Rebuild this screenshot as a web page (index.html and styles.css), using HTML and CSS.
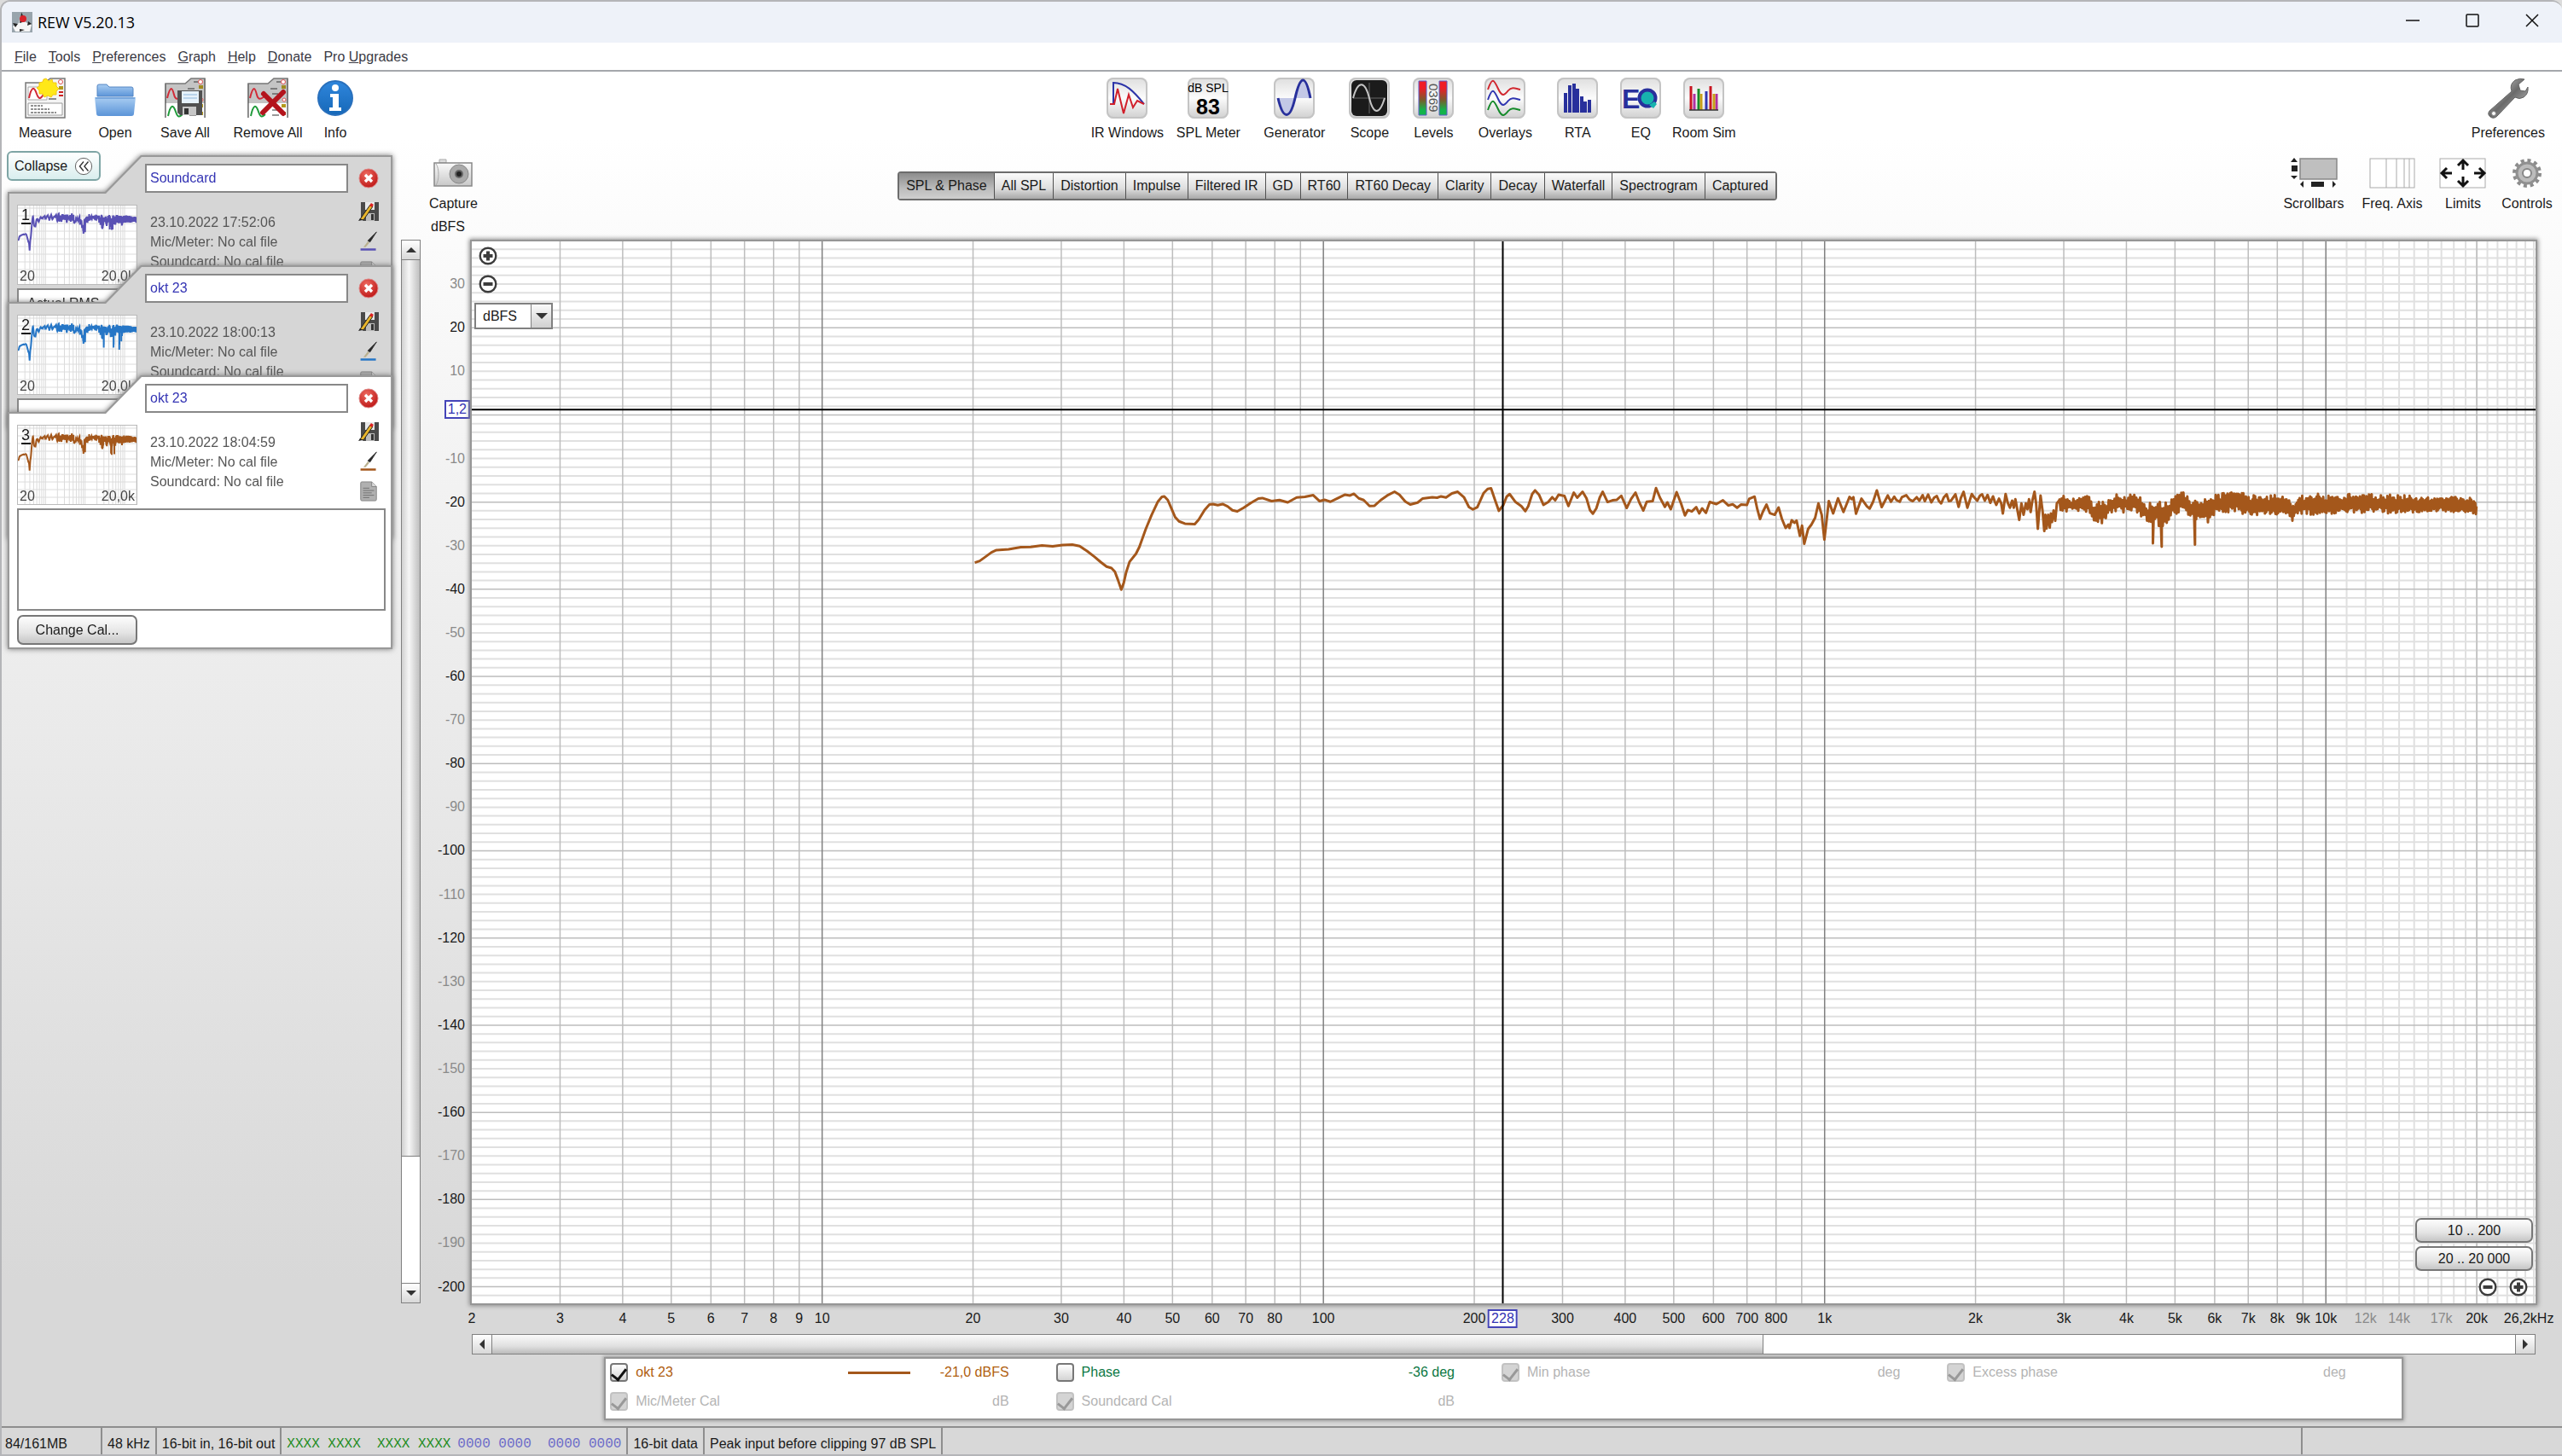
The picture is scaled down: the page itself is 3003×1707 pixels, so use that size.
FILE: index.html
```html
<!DOCTYPE html>
<html lang="en">
<head>
  <meta charset="UTF-8">
  <meta name="viewport" content="width=device-width, initial-scale=1.0">
  <title>REW V5.20.13</title>
  <link rel="stylesheet" href="styles.css">
</head>
<body>
  <!-- Shared gradients and symbols -->
  <svg class="defs" width="0" height="0" aria-hidden="true">
    <defs>
      <linearGradient id="grey-v" x1="0" y1="0" x2="0" y2="1"><stop offset="0" stop-color="#fafafa"/><stop offset="1" stop-color="#c8c8c8"/></linearGradient>
      <linearGradient id="blue-v" x1="0" y1="0" x2="0" y2="1"><stop offset="0" stop-color="#a9cdf2"/><stop offset="1" stop-color="#5b94d8"/></linearGradient>
      <linearGradient id="info-v" x1="0" y1="0" x2="0" y2="1"><stop offset="0" stop-color="#2f86dc"/><stop offset="1" stop-color="#1668b8"/></linearGradient>
      <linearGradient id="level-v" x1="0" y1="0" x2="0" y2="1"><stop offset="0.2" stop-color="#f01c26"/><stop offset="0.55" stop-color="#7c5a2a"/><stop offset="0.85" stop-color="#12b44a"/></linearGradient>
      <radialGradient id="red-r" cx="0.4" cy="0.3" r="0.8"><stop offset="0" stop-color="#ee6a60"/><stop offset="1" stop-color="#b80f0f"/></radialGradient>
      <linearGradient id="metal" x1="0" y1="0" x2="1" y2="1"><stop offset="0" stop-color="#e8e8e8"/><stop offset="0.5" stop-color="#6a6a6a"/><stop offset="1" stop-color="#d0d0d0"/></linearGradient>
      <symbol id="i-close" viewBox="0 0 24 24">
        <circle cx="12" cy="12" r="11" fill="url(#red-r)" stroke="#d88"/>
        <path d="M8 8l8 8M16 8l-8 8" stroke="#fff" stroke-width="3.4"/>
      </symbol>
      <symbol id="i-savepen" viewBox="0 0 24 24">
        <path d="M3 1h21v22H6l-3-3z" fill="#4a4a4a"/>
        <path d="M8 1h11v9H8z" fill="#e8e8e8"/><path d="M9 14h10v9H9z" fill="#bcbcbc"/><path d="M15 15h3v7h-3z" fill="#333"/>
        <path d="M2 21L14 4l3 2L6 22z" fill="#e8b52c" stroke="#222"/><path d="M13 5l2-3 3 2-2 3z" fill="#d22"/>
        <path d="M0 23l2-3 3 2z" fill="#222"/>
      </symbol>
      <symbol id="i-pen" viewBox="0 0 24 28">
        <path d="M23 1L11 13l3 2z" fill="#222" stroke="#333"/><path d="M11 14l2 2-5 6H5z" fill="#b9b08e"/>
        <path d="M1 25h21" stroke="currentColor" stroke-width="3"/>
      </symbol>
      <symbol id="i-doc" viewBox="0 0 24 26">
        <path d="M2 2.500q0-1.500 1.500-1.500H16l6 6v16.500q0 1.500-1.500 1.500h-17Q2 25 2 23.500z" fill="#b0b0b0" stroke="#808080"/>
        <path d="M16 1v6h6" fill="#ddd" stroke="#808080"/>
        <path d="M5 9h8M5 12h14M5 15h11M5 18h14M5 21h8" stroke="#6c6c6c"/>
      </symbol>
      <symbol id="i-plus" viewBox="0 0 22 22">
        <circle cx="11" cy="11" r="9.300" fill="#fff" stroke="#3c3c3c" stroke-width="2.400"/><path d="M11 5.500v11M5.500 11h11" stroke="#3c3c3c" stroke-width="4"/>
      </symbol>
      <symbol id="i-minus" viewBox="0 0 22 22">
        <circle cx="11" cy="11" r="9.300" fill="#fff" stroke="#3c3c3c" stroke-width="2.400"/><path d="M5.500 11h11" stroke="#3c3c3c" stroke-width="4"/>
      </symbol>
      <symbol id="i-sheet" viewBox="0 0 48 48">
        <path d="M1 47V7h23l7-6h16v46" fill="#c4c4c4" stroke="#777" stroke-width="1.500"/>
        <path d="M1 30h46v17H1z" fill="#fff"/><path d="M1 7v40M47 1v46" stroke="#777" stroke-width="1.500"/>
        <path d="M3 24c4-16 6-12 8-4s6 4 9 2" fill="none" stroke="#d12a36" stroke-width="2"/>
        <path d="M4 45c3-14 6-14 9-5s5 5 8 3" fill="none" stroke="#1f9a3a" stroke-width="2"/>
        <path d="M34 5h6M27 13h8M29 19h7M29 38h8M29 44h8" stroke="#333"/>
        <circle cx="42" cy="5" r="2.500" fill="#fff" stroke="#e05050"/><path d="M40 9h5v4h-5z" fill="#a08a20"/>
        <circle cx="43" cy="26" r="2" fill="#fff" stroke="#e05050"/><path d="M40 31h5v4h-5zM40 40h5v4h-5z" fill="#b39a1c"/>
      </symbol>
    </defs>
  </svg>

  <header class="titlebar">
    <svg class="app-icon" viewBox="0 0 24 24"><path d="M0 0h24v24H0z" fill="#98a4ac"/><path d="M11 0l5 12 7 3-2 8H4l-3-6 7-4z" fill="#f6f6f6"/><path d="M11 0l5 11-7 2z" fill="#222"/><circle cx="13" cy="8" r="4" fill="#d8222a"/><path d="M1 13l6 1-3 4zM19 11l4 3-5 2zM9 20l6 1-6 2z" fill="#222"/></svg>
    <h1>REW V5.20.13</h1>
    <div class="window-buttons">
      <button aria-label="Minimize"><svg viewBox="0 0 16 16"><path d="M0 8h16"/></svg></button>
      <button aria-label="Maximize"><svg viewBox="0 0 16 16"><rect x="1" y="1" width="14" height="14" rx="1"/></svg></button>
      <button aria-label="Close"><svg viewBox="0 0 16 16"><path d="M1 1l14 14M15 1L1 15"/></svg></button>
    </div>
  </header>

  <nav class="menubar">
    <a href="#"><u>F</u>ile</a>
    <a href="#"><u>T</u>ools</a>
    <a href="#"><u>P</u>references</a>
    <a href="#"><u>G</u>raph</a>
    <a href="#"><u>H</u>elp</a>
    <a href="#"><u>D</u>onate</a>
    <a href="#">Pro <u>U</u>pgrades</a>
  </nav>

  <div class="toolbar">
    <div class="tools tools-file">
      <button class="tool">
        <svg viewBox="0 0 48 48"><path d="M1 6h22l7-5h17v46H1z" fill="#f4f4f4" stroke="#777" stroke-width="1.500"/><path d="M4 11h22v15H4z" fill="#fff" stroke="#aaa"/><path d="M5 24c3-14 6-14 9-5s6 4 9-1" fill="none" stroke="#d12a36" stroke-width="2"/><path d="M4 30h40v14H4z" fill="#fff" stroke="#999"/><path d="M7 33h14M7 37h22M7 41h30" stroke="#222" stroke-dasharray="3 1"/><path d="M28 25h9M27 20h4" stroke="#222"/><circle cx="42" cy="5" r="2.500" fill="#fff" stroke="#e05050"/><path d="M40 10h5v4h-5z" fill="#b39a1c"/><path d="M40 17h5M40 21h5" stroke="#c22" stroke-width="2"/><path d="M25 1l3 3 4-2 1 4 4 0 0 4 3 3-3 3 0 4-4 0-2 3-4-2-4 2-2-4-4 0 0-4-3-3 3-2 0-4 4-1 1-3z" fill="#ffe818" stroke="#f2c714"/></svg>
        Measure
      </button>
      <button class="tool">
        <svg viewBox="0 0 48 48"><path d="M3 22V10q0-2 2-2h9l3 3h26q2 0 2 2v9z" fill="url(#blue-v)" stroke="#5586c4"/><path d="M0 23h48l-2 19q0 3-3 3H5q-3 0-3-3z" fill="url(#blue-v)"/><path d="M1 24h46" stroke="#4f88cc"/></svg>
        Open
      </button>
      <button class="tool">
        <svg viewBox="0 0 48 48"><use href="#i-sheet"/><path d="M15 15h29v29H18l-3-3z" fill="#505050"/><path d="M20 16h20v14H20z" fill="#e6f2fb"/><path d="M22 20h16M22 24h16" stroke="#8fb8dc"/><path d="M21 34h16v10H21z" fill="#c6c6c6"/><path d="M23 36h5v7h-5z" fill="#333"/></svg>
        Save All
      </button>
      <button class="tool">
        <svg viewBox="0 0 48 48"><use href="#i-sheet"/><path d="M19 19l23 23M42 17L18 41" stroke="#b3141c" stroke-width="6" stroke-linecap="round"/></svg>
        Remove All
      </button>
      <button class="tool">
        <svg viewBox="0 0 48 48"><circle cx="24" cy="24" r="20" fill="url(#info-v)" stroke="#2a70bc" stroke-width="2"/><circle cx="24" cy="12" r="4" fill="#fff"/><path d="M18 19h10v16h3v4H17v-4h4V23h-3z" fill="#fff"/></svg>
        Info
      </button>
    </div>

    <div class="tools tools-windows">
      <button class="tool">
        <svg class="tile" viewBox="0 0 48 48"><path d="M8 32V6c14 0 24 10 36 25" fill="none" stroke="#2c33a8" stroke-width="2"/><path d="M4 31h5l4-18 7 29 6-22 5 15 5-8 8 4" fill="none" stroke="#d11f2a" stroke-width="2"/></svg>
        IR Windows
      </button>
      <button class="tool">
        <svg class="tile" viewBox="0 0 48 48"><text x="24" y="17" class="t-unit">dB SPL</text><text x="24" y="43" class="t-spl">83</text></svg>
        SPL Meter
      </button>
      <button class="tool">
        <svg class="tile" viewBox="0 0 48 48"><path d="M5 24c4 26 14 26 19 0zM24 24C28-3 38-3 42 24z" fill="#c3c8e6"/><path d="M5 24c6 26 14 26 20 0s12-30 18 0" fill="none" stroke="#28309c" stroke-width="3"/></svg>
        Generator
      </button>
      <button class="tool">
        <svg class="tile" viewBox="0 0 48 48"><rect x="3" y="3" width="42" height="42" rx="6" fill="#1b1b1b"/><path d="M24 6v36M5 24h38" stroke="#666"/><path d="M5 24c6-22 14-20 19 0s12 20 18 0" fill="none" stroke="#c4c4c4" stroke-width="2"/></svg>
        Scope
      </button>
      <button class="tool">
        <svg class="tile" viewBox="0 0 48 48"><path d="M7 4h9v40H7zM31 4h9v40h-9z" fill="url(#level-v)" stroke="#5a5ac8"/><text class="t-levels" transform="translate(19 7) rotate(90)">0369</text></svg>
        Levels
      </button>
      <button class="tool">
        <svg class="tile" viewBox="0 0 48 48"><g fill="none" stroke-width="2"><path d="M4 14C9-1 11 2 16 13s8 7 12 2 9-2 14-1" stroke="#d1282f"/><path d="M4 26c5-15 7-12 12-1s8 7 12 2 9-2 14-1" stroke="#2f35b0"/><path d="M4 38c5-15 7-12 12-1s8 7 12 2 9-2 14-1" stroke="#158a2a"/></g></svg>
        Overlays
      </button>
      <button class="tool">
        <svg class="tile" viewBox="0 0 48 48"><path d="M8 41V18h4v23M13 41V9h4v32M18 41V7h4v34M22 41V13h4v28M27 41V22h4v19M31 41V28h4v13M36 41V26h4v15" fill="#28309c"/></svg>
        RTA
      </button>
      <button class="tool">
        <svg class="tile" viewBox="0 0 48 48"><circle cx="32" cy="24" r="9.500" fill="#17b3ae" stroke="#28309c" stroke-width="4"/><path d="M34 32l5 4 4-5-3-3z" fill="#17b3ae"/><text x="2" y="36" class="t-eq">E</text></svg>
        EQ
      </button>
      <button class="tool">
        <svg class="tile" viewBox="0 0 48 48"><g stroke-width="3"><path d="M9 38V10M32 38V10" stroke="#c81420"/><path d="M13 38V19M39 38V19" stroke="#b030a0"/><path d="M18 38V13" stroke="#168a28"/><path d="M21 38V19M36 38V19" stroke="#c8a018"/><path d="M27 38V16" stroke="#2f35b0"/></g><path d="M7 38h34" stroke="#333" stroke-width="1.500"/></svg>
        Room Sim
      </button>
    </div>

    <div class="tools tools-prefs">
      <button class="tool">
        <svg viewBox="0 0 48 48"><path d="M2 39L28 16q-3-8 4-13 6-3 11-1l-7 6 2 7 6 1 3-5q1 8-5 12-5 3-10 0L11 45q-4 4-8 1t-1-7z" fill="url(#metal)" stroke="#666"/><circle cx="7" cy="42" r="2.500" fill="#fff" stroke="#888"/></svg>
        Preferences
      </button>
    </div>
  </div>

  <main class="main">
    <aside class="sidebar">
      <button class="collapse">Collapse
        <svg viewBox="0 0 24 24"><circle cx="12" cy="12" r="10.500" fill="#fff" stroke="#555"/><path d="M12 6l-5 6 5 6M18 6l-5 6 5 6" fill="none" stroke="#333" stroke-width="1.500"/></svg>
      </button>
      <ul class="measurements">
        <li>
          <article class="card card-1">
            <div class="thumb"><svg class="thumb-plot" data-index="1"></svg><b>1</b><span>20</span><span>20,0k</span></div>
            <input class="name" type="text" value="Soundcard" aria-label="Measurement name">
            <p class="info">23.10.2022 17:52:06<br>Mic/Meter: No cal file<br>Soundcard: No cal file</p>
            <div class="card-actions">
              <button aria-label="Remove"><svg viewBox="0 0 24 24"><use href="#i-close"/></svg></button>
              <button aria-label="Save"><svg viewBox="0 0 24 24"><use href="#i-savepen"/></svg></button>
              <button aria-label="Trace colour"><svg viewBox="0 0 24 28"><use href="#i-pen"/></svg></button>
              <button aria-label="Notes"><svg viewBox="0 0 24 26"><use href="#i-doc"/></svg></button>
            </div>
            <textarea class="notes" aria-label="Notes">Actual RMS</textarea>
            <button class="push change-cal">Change Cal...</button>
          </article>
        </li>
        <li>
          <article class="card card-2">
            <div class="thumb"><svg class="thumb-plot" data-index="2"></svg><b>2</b><span>20</span><span>20,0k</span></div>
            <input class="name" type="text" value="okt 23" aria-label="Measurement name">
            <p class="info">23.10.2022 18:00:13<br>Mic/Meter: No cal file<br>Soundcard: No cal file</p>
            <div class="card-actions">
              <button aria-label="Remove"><svg viewBox="0 0 24 24"><use href="#i-close"/></svg></button>
              <button aria-label="Save"><svg viewBox="0 0 24 24"><use href="#i-savepen"/></svg></button>
              <button aria-label="Trace colour"><svg viewBox="0 0 24 28"><use href="#i-pen"/></svg></button>
              <button aria-label="Notes"><svg viewBox="0 0 24 26"><use href="#i-doc"/></svg></button>
            </div>
            <textarea class="notes" aria-label="Notes"></textarea>
            <button class="push change-cal">Change Cal...</button>
          </article>
        </li>
        <li>
          <article class="card card-3 selected">
            <div class="thumb"><svg class="thumb-plot" data-index="3"></svg><b>3</b><span>20</span><span>20,0k</span></div>
            <input class="name" type="text" value="okt 23" aria-label="Measurement name">
            <p class="info">23.10.2022 18:04:59<br>Mic/Meter: No cal file<br>Soundcard: No cal file</p>
            <div class="card-actions">
              <button aria-label="Remove"><svg viewBox="0 0 24 24"><use href="#i-close"/></svg></button>
              <button aria-label="Save"><svg viewBox="0 0 24 24"><use href="#i-savepen"/></svg></button>
              <button aria-label="Trace colour"><svg viewBox="0 0 24 28"><use href="#i-pen"/></svg></button>
              <button aria-label="Notes"><svg viewBox="0 0 24 26"><use href="#i-doc"/></svg></button>
            </div>
            <textarea class="notes" aria-label="Notes"></textarea>
            <button class="push change-cal">Change Cal...</button>
          </article>
        </li>
      </ul>
    </aside>

    <section class="graph">
      <div class="graph-header">
        <div class="tools">
          <button class="tool tool-small capture">
            <svg viewBox="0 0 46 32"><path d="M7 0h8v4H7z" fill="#ddd" stroke="#aaa"/><rect x="1" y="4" width="44" height="27" fill="url(#grey-v)" stroke="#888" stroke-width="1.500"/><path d="M3 5c4 5 4 20 0 25" fill="none" stroke="#aaa"/><circle cx="30" cy="17" r="11" fill="#aaa" stroke="#888"/><circle cx="30" cy="17" r="5" fill="#666"/><circle cx="30" cy="17" r="3" fill="#222"/></svg>
            Capture
          </button>
        </div>
        <div class="tabs" role="tablist">
          <button class="active">SPL &amp; Phase</button><button>All SPL</button><button>Distortion</button><button>Impulse</button><button>Filtered IR</button><button>GD</button><button>RT60</button><button>RT60 Decay</button><button>Clarity</button><button>Decay</button><button>Waterfall</button><button>Spectrogram</button><button>Captured</button>
        </div>
        <div class="tools tools-graph">
          <button class="tool tool-small">
            <svg viewBox="0 0 56 36"><rect x="12" y="1" width="43" height="24" fill="#bfbfbf" stroke="#888" stroke-width="1.500"/><path d="M5 0l4 5H1zM5 25l4-4H1zM2 9h7v7H2zM12 31l4-4v8zM54 31l-4-4v8zM25 28h15v6H25z" fill="#222"/></svg>
            Scrollbars
          </button>
          <button class="tool tool-small">
            <svg viewBox="0 0 56 36"><rect x="2" y="1" width="52" height="34" fill="#fff" stroke="#aaa"/><path d="M21 1v34M33 1v34M42 1v34M48 1v34" stroke="#aaa"/></svg>
            Freq. Axis
          </button>
          <button class="tool tool-small">
            <svg viewBox="0 0 56 36"><rect x="1" y="1" width="53" height="34" fill="#fff" stroke="#aaa"/><path d="M28 14V5M22 9l6-6 6 6M28 22v9M22 27l6 6 6-6M15 18H5M9 12l-6 6 6 6M41 18h10M47 12l6 6-6 6" fill="none" stroke="#111" stroke-width="3"/></svg>
            Limits
          </button>
          <button class="tool tool-small">
            <svg viewBox="0 0 56 36"><circle cx="28" cy="18" r="15" fill="none" stroke="#8c8c8c" stroke-width="4" stroke-dasharray="4 3.854"/><circle cx="28" cy="18" r="12" fill="#bcbcbc" stroke="#909090" stroke-width="3"/><circle cx="28" cy="18" r="5" fill="#fff" stroke="#888" stroke-width="2"/></svg>
            Controls
          </button>
        </div>
      </div>
      <div class="unit">dBFS</div>
      <div class="list-scroll">
        <button aria-label="Scroll up"></button><div class="bar"></div><div class="track"></div><button class="down" aria-label="Scroll down"></button>
      </div>
      <div class="y-axis" id="y-axis"></div>
      <div class="plot">
        <svg id="plot" preserveAspectRatio="none"></svg>
        <div class="plot-controls">
          <button class="zoom" aria-label="Zoom in level"><svg><use href="#i-plus"/></svg></button>
          <button class="zoom" aria-label="Zoom out level"><svg><use href="#i-minus"/></svg></button>
          <select aria-label="Level units"><option>dBFS</option></select>
        </div>
        <div class="plot-ranges">
          <button class="push">10 .. 200</button>
          <button class="push">20 .. 20 000</button>
          <div class="zoom-pair">
            <button class="zoom" aria-label="Zoom out frequency"><svg><use href="#i-minus"/></svg></button>
            <button class="zoom" aria-label="Zoom in frequency"><svg><use href="#i-plus"/></svg></button>
          </div>
        </div>
      </div>
      <div class="x-axis" id="x-axis"></div>
      <div class="freq-scroll">
        <button aria-label="Scroll left"></button><div class="bar"></div><div class="track"></div><button class="right" aria-label="Scroll right"></button>
      </div>
      <div class="legend">
        <div class="entry trace"><label><input type="checkbox" checked>okt 23</label><i></i><output>-21,0 dBFS</output></div>
        <div class="entry phase"><label><input type="checkbox">Phase</label><output>-36 deg</output></div>
        <div class="entry off"><label><input type="checkbox" checked disabled>Min phase</label><output>deg</output></div>
        <div class="entry off"><label><input type="checkbox" checked disabled>Excess phase</label><output>deg</output></div>
        <div class="entry off"><label><input type="checkbox" checked disabled>Mic/Meter Cal</label><output>dB</output></div>
        <div class="entry off"><label><input type="checkbox" checked disabled>Soundcard Cal</label><output>dB</output></div>
      </div>
    </section>
  </main>

  <footer class="statusbar">
    <span class="memory">84/161MB</span>
    <span>48 kHz</span>
    <span>16-bit in, 16-bit out</span>
    <span class="bits"><code class="on">XXXX XXXX&nbsp; XXXX XXXX</code><code>0000 0000&nbsp; 0000 0000</code></span>
    <span>16-bit data</span>
    <span>Peak input before clipping 97 dB SPL</span>
    <span class="fill"></span>
    <span class="corner"></span>
  </footer>
  <script src="script.js"></script>
</body>
</html>
```
FILE: styles.css
```css
* {
  box-sizing: border-box;
  margin: 0;
  padding: 0;
}
html {
  background: #dcdcdc;
}
body {
  display: flex;
  flex-direction: column;
  height: 100vh;
  overflow: hidden;
  border: 2px solid #b4b5b8;
  border-right-width: 0;
  border-radius: 12px 12px 0 0;
  background: #fff linear-gradient(#fff 160px, #f4f4f4 500px, #d8d8d8 1500px);
  font: 16px/18px "Liberation Sans", Arial, sans-serif;
  color: #1a1a1a;
}
button, input, select, textarea {
  font: inherit;
  color: inherit;
}
button {
  background: none;
  border: none;
}
.defs {
  position: absolute;
}

/* Title bar and menu */
.titlebar {
  display: flex;
  align-items: center;
  gap: 6px;
  height: 48px;
  padding-left: 12px;
  background: #eef2f9;
}
.app-icon {
  width: 24px;
  height: 24px;
}
.titlebar h1 {
  flex: 1;
  font: 18px/24px "Open Sans", "Noto Sans", sans-serif;
  color: #000;
}
.window-buttons {
  display: flex;
}
.window-buttons button {
  width: 70px;
  height: 24px;
}
.window-buttons svg {
  width: 16px;
  height: 16px;
  fill: none;
  stroke: #111;
  stroke-width: 1.5;
}
.menubar {
  display: flex;
  align-items: center;
  gap: 14px;
  height: 34px;
  padding: 2px 15px 0;
  background: #fff;
  border-bottom: 2px solid #a4a7ac;
}
.menubar a {
  color: #3a3a44;
  text-decoration: none;
}

/* Toolbars */
.toolbar {
  display: flex;
  justify-content: space-between;
  padding: 7px 20px 2px 10px;
}
.tools {
  display: grid;
  grid-auto-flow: column;
  justify-items: center;
}
.tools-file {
  grid-template-columns: 82px 82px 82px 112px 46px;
}
.tools-windows {
  grid-template-columns: 94px 96px 106px 70px 80px 88px 82px 66px 82px;
}
.tools-graph {
  grid-template-columns: 96px 88px 78px 72px;
}
.tool {
  display: flex;
  flex-direction: column;
  align-items: center;
  gap: 8px;
  height: 74px;
  white-space: nowrap;
}
.tool svg {
  width: 48px;
  height: 48px;
}
.tool-small {
  height: 64px;
  gap: 9px;
}
.tool-small svg {
  width: 56px;
  height: 36px;
}
.capture svg {
  width: 46px;
}
.tile {
  border-radius: 8px;
  box-shadow: inset 0 0 0 2px #c4c4c4;
  background: linear-gradient(#dedede, #fbfbfb 50%, #cfcfcf);
}
.t-unit {
  font-size: 14px;
  text-anchor: middle;
}
.t-spl {
  font-size: 25px;
  font-weight: bold;
  text-anchor: middle;
}
.t-levels {
  font-size: 15px;
  fill: #555;
}
.t-eq {
  font-size: 32px;
  font-weight: bold;
  fill: #28309c;
}

/* Main area */
.main {
  flex: 1;
  display: grid;
  grid-template-columns: 468px 1fr;
  min-height: 0;
}
.sidebar {
  position: relative;
  padding: 15px 10px 0 7px;
}
.collapse {
  position: absolute;
  z-index: 1;
  left: 6px;
  top: 10px;
  display: flex;
  align-items: center;
  gap: 8px;
  height: 35px;
  padding: 0 7px;
  border: 2px solid #7ea5a5;
  border-radius: 6px;
  background: linear-gradient(#fff, #d9eeee);
}
.collapse svg {
  width: 22px;
  height: 22px;
}
.measurements {
  list-style: none;
}
.measurements li {
  filter: drop-shadow(0 0 3px #777);
}
.measurements li + li {
  margin-top: -192px;
}
.card {
  display: grid;
  grid-template-columns: 141px 1fr 24px;
  grid-template-rows: 34px 102px 120px 35px;
  column-gap: 9px;
  row-gap: 5px;
  height: 321px;
  padding: 10px 16px 0 11px;
  background: #999;
  clip-path: polygon(156px 0, 100% 0, 100% 100%, 0 100%, 0 43px, 114px 43px);
  position: relative;
}
.card::before {
  content: "";
  position: absolute;
  inset: 2px;
  background: #d6d6d6;
  clip-path: polygon(155px 0, 100% 0, 100% 100%, 0 100%, 0 43px, 113px 43px);
}
.card.selected::before {
  background: #fff;
}
.card > * {
  position: relative;
}
.card-1 {
  --trace: #5951b4;
}
.card-2 {
  --trace: #2676c6;
}
.card-3 {
  --trace: #a4571b;
}
.name {
  grid-column: 2;
  grid-row: 1;
  min-width: 0;
  margin-right: 3px;
  padding: 0 4px;
  border: 2px solid #888;
  background: #fff;
  color: #3434b4;
}
.thumb {
  grid-column: 1;
  grid-row: 2;
  align-self: start;
  margin-top: 9px;
  height: 94px;
  border: 1px solid #bbb;
  background: #fff;
}
.thumb-plot {
  display: block;
  width: 100%;
  height: 100%;
}
.thumb b {
  position: absolute;
  left: 4px;
  top: 2px;
  width: 11px;
  border-bottom: 2px solid #111;
  font-size: 18px;
  font-weight: normal;
}
.thumb span {
  position: absolute;
  left: 2px;
  bottom: 0;
  color: #444;
}
.thumb span + span {
  left: auto;
  right: 2px;
}
.info {
  grid-column: 2;
  grid-row: 2;
  padding: 18px 0 0 6px;
  line-height: 23px;
  color: #555;
  white-space: nowrap;
}
.card-actions {
  grid-column: 3;
  grid-row: 1 / 3;
  display: flex;
  flex-direction: column;
  gap: 11px;
  padding-top: 5px;
  color: var(--trace);
}
.card-actions svg {
  display: block;
  width: 24px;
  height: 24px;
}
.card-actions button:first-child {
  margin-bottom: 4px;
}
.notes {
  grid-column: 1 / 4;
  grid-row: 3;
  margin-right: -8px;
  padding: 7px 10px;
  border: 2px solid #888;
  background: #fff;
  resize: none;
}
.push {
  border: 2px solid #777;
  border-radius: 7px;
  background: linear-gradient(#fdfdfd, #e4e4e4 60%, #c6c6c6);
}
.change-cal {
  grid-column: 1;
  grid-row: 4;
}

/* Scroll bars */
.list-scroll, .freq-scroll {
  display: flex;
  border: 1px solid #808080;
  background: #fff;
}
.list-scroll {
  flex-direction: column;
}
.list-scroll button, .freq-scroll button {
  display: grid;
  place-items: center;
  flex: 0 0 22px;
  background: linear-gradient(#fff, #d8d8d8);
}
.list-scroll button::before, .freq-scroll button::before {
  content: "";
  border: 6px solid transparent;
  border-top-width: 0;
  border-bottom-color: #333;
}
.list-scroll .down::before {
  transform: rotate(180deg);
}
.freq-scroll button::before {
  transform: rotate(-90deg);
}
.freq-scroll .right::before {
  transform: rotate(90deg);
}
.list-scroll .bar {
  flex: 1053;
  border: 1px solid #808080;
  border-width: 1px 0;
  background: linear-gradient(90deg, #d0d0d0, #f6f6f6 40%, #bebebe);
}
.list-scroll .track {
  flex: 149;
  border-bottom: 1px solid #808080;
}
.freq-scroll .bar {
  flex: 1491;
  border: 1px solid #808080;
  border-width: 0 1px;
  background: linear-gradient(#fafafa, #e0e0e0 60%, #bababa);
}
.freq-scroll .track {
  flex: 882;
  border-right: 1px solid #808080;
}

/* Graph */
.graph {
  display: grid;
  grid-template-columns: 23px 60px 1fr;
  grid-template-rows: 90px 18px 1fr 36px 24px auto;
  padding: 0 31px 9px 0;
  min-width: 0;
}
.graph-header {
  grid-column: 2 / 4;
  display: grid;
  grid-template-columns: 3fr auto 5fr;
  margin-right: -26px;
  padding: 18px 0 0 10px;
}
.graph-header .tools {
  justify-self: start;
}
.graph-header .tools-graph {
  justify-self: end;
}
.tabs {
  display: flex;
  align-self: start;
  margin-top: 16px;
  border: 2px solid #6c6c6c;
  border-radius: 4px;
}
.tabs button {
  height: 30px;
  padding: 0 8px;
  background: linear-gradient(#fbfbfb, #dedede 60%, #a8a8a8);
  white-space: nowrap;
}
.tabs button + button {
  border-left: 1px solid #505050;
}
.tabs .active {
  background: linear-gradient(#8c8c8c, #bcbcbc 60%, #cfcfcf);
}
.unit {
  grid-column: 2;
  grid-row: 2;
  justify-self: end;
  padding-right: 8px;
}
.list-scroll {
  grid-column: 1;
  grid-row: 3;
  margin-top: 6px;
}
.y-axis {
  grid-column: 2;
  grid-row: 3;
  position: relative;
  margin-top: 8px;
}
.y-axis span {
  position: absolute;
  right: 8px;
  transform: translateY(-50%);
}
.x-axis {
  grid-column: 3;
  grid-row: 4;
  position: relative;
}
.x-axis span {
  position: absolute;
  top: 9px;
  transform: translateX(-50%);
}
.y-axis .minor, .x-axis .minor {
  color: #8a8a8a;
}
.y-axis .cursor, .x-axis .cursor {
  border: 2px solid #4444b8;
  background: #fff;
  padding: 0 2px;
  color: #3434b4;
}
.y-axis .cursor {
  right: 2px;
}
.x-axis .cursor {
  top: 7px;
}
.plot {
  grid-column: 3;
  grid-row: 3;
  position: relative;
  margin-top: 8px;
  min-height: 0;
  background: #fff;
  box-shadow: 0 0 0 2px #969696, 0 0 5px 3px #8c8c8c;
}
#plot {
  position: absolute;
  width: 100%;
  height: 100%;
}
.grid-light {
  stroke: #e0e0e0;
  stroke-width: 2;
}
.grid-mid {
  stroke: #bdbdbd;
  stroke-width: 1.5;
}
.grid-dark {
  stroke: #808080;
  stroke-width: 1.5;
}
.cursor-line {
  stroke: #000;
  stroke-width: 2;
}
.trace-line {
  fill: none;
  stroke: #a4571b;
  stroke-width: 3;
  stroke-linejoin: round;
}
.thumb-grid {
  stroke: #dcdcdc;
}
.thumb-line {
  fill: none;
  stroke: var(--trace);
  stroke-width: 2;
}
.plot-controls {
  position: absolute;
  left: 3px;
  top: 6px;
  display: flex;
  flex-direction: column;
  align-items: flex-start;
  gap: 11px;
}
.zoom {
  margin-left: 5px;
}
.zoom svg {
  display: block;
  width: 22px;
  height: 22px;
}
.plot-controls select {
  width: 92px;
  height: 31px;
  padding-left: 8px;
  appearance: none;
  border: 2px solid #808080;
  background:
    linear-gradient(#808080, #808080) right 23px top / 1px 100% no-repeat,
    linear-gradient(#fafafa, #d0d0d0) right / 23px 100% no-repeat,
    #fff;
}
.plot-controls::after {
  content: "";
  position: absolute;
  right: 6px;
  bottom: 12px;
  border: 7px solid transparent;
  border-bottom-width: 0;
  border-top-color: #333;
  pointer-events: none;
}
.plot-ranges {
  position: absolute;
  right: 3px;
  bottom: 8px;
  display: flex;
  flex-direction: column;
  gap: 4px;
  width: 138px;
}
.plot-ranges .push {
  height: 29px;
}
.zoom-pair {
  display: flex;
  justify-content: flex-end;
  gap: 9px;
  padding: 4px 6px 0 0;
}
.freq-scroll {
  grid-column: 3;
  grid-row: 5;
}

/* Legend */
.legend {
  grid-column: 3;
  grid-row: 6;
  justify-self: center;
  display: grid;
  grid-template-columns: repeat(4, 1fr);
  column-gap: 55px;
  row-gap: 12px;
  width: 87%;
  margin-top: 5px;
  padding: 5px 65px 9px 5px;
  background: #fff;
  box-shadow: 0 0 0 2px #969696, 0 0 4px 3px #999;
}
.entry {
  display: flex;
  align-items: center;
  height: 22px;
}
.entry label {
  display: flex;
  align-items: center;
  gap: 9px;
  flex: 1;
}
.entry i {
  width: 73px;
  height: 3px;
  background: #a4571b;
}
.entry output {
  width: 116px;
  text-align: right;
}
.entry input {
  appearance: none;
  display: grid;
  place-items: center;
  width: 21px;
  height: 22px;
  border: 2px solid #777;
  border-radius: 4px;
  background: linear-gradient(#fff, #d4d4d4);
}
.entry input:checked::before {
  content: "";
  width: 8px;
  height: 14px;
  border: solid #111;
  border-width: 0 3px 3px 0;
  transform: rotate(38deg);
}
.entry input:disabled {
  border-color: #c2c2c2;
  background: #d4d4d4;
}
.entry input:disabled::before {
  border-color: #999;
}
.trace {
  color: #b06010;
}
.phase {
  color: #0c7844;
}
.off {
  color: #b4b4b4;
}
.entry:nth-child(n + 5) {
  grid-row: 2;
}

/* Status bar */
.statusbar {
  display: flex;
  height: 33px;
  border-top: 2px solid #8e8e8e;
  background: #d8d8d8;
  white-space: nowrap;
}
.statusbar span {
  display: flex;
  align-items: center;
  gap: 8px;
  padding: 6px 6px 0;
  border-right: 2px solid #8e8e8e;
}
.statusbar .memory {
  width: 118px;
  padding-left: 4px;
}
.statusbar code {
  font: 16px/18px "Liberation Mono", "Courier New", monospace;
  color: #6c6cc8;
}
.statusbar .on {
  color: #1e8c1e;
}
.statusbar .fill {
  flex: 1;
}
.statusbar .corner {
  flex: 0 0 304px;
  border-right: none;
}
```
FILE: script.js
```js
// Plot space: 2 Hz .. 26.2 kHz over 2419 units, 39.8 .. -203.8 dB over 1244 units
const W = 2419, H = 1244;
const F0 = 2, F1 = 26200, DB1 = 39.8, DB0 = -203.8;
const fx = f => Math.log(f / F0) / Math.log(F1 / F0) * W;
const dy = d => (DB1 - d) / (DB1 - DB0) * H;

// Smooth part of the response, 20 Hz to about 630 Hz
const low = '76,358 86,352 98,337 110,322 120,314 145,311 170,304 190,303 213,298 235,301 255,296 275,295 290,300 305,317 320,337 333,356 345,372 355,377 362,390 368,418 375,453 380,430 385,392 392,355 405,327 412,303 425,240 437,190 450,143 458,127 463,125 470,138 478,170 485,198 493,213 505,221 525,223 533,207 545,173 555,154 562,152 572,156 582,152 592,160 602,174 612,178 625,165 640,148 655,133 663,131 682,142 698,138 715,146 733,129 750,127 767,121 780,142 790,137 802,144 815,133 832,119 842,122 850,116 860,132 870,138 882,159 892,158 905,138 918,122 933,109 943,119 955,143 965,154 980,147 990,133 1010,128 1020,130 1028,125 1038,129 1050,115 1062,109 1075,129 1085,163 1093,171 1102,163 1115,113 1123,99 1130,97 1138,137 1146,176 1155,156 1162,126 1168,117 1180,145 1192,160 1200,177 1206,160 1214,117 1220,104 1228,119 1237,155 1247,145 1255,128 1261,139 1268,119 1280,124 1288,159 1299,112 1306,130 1317,109 1325,132 1332,173 1338,186 1345,167 1352,129 1358,109 1368,145 1378,139 1387,137 1396,123 1407,166 1416,134 1425,112 1433,147 1441,175 1448,144 1460,142 1467,96 1475,130 1485,162 1490,146 1497,170 1509,110 1518,150 1526,192 1532,173 1540,178 1549,163 1555,185 1561,167';
// 630 Hz to about 2.9 kHz
const mid = '1,183 8,145 20,152 32,139 42,157 50,153 58,165 65,154 76,155 80,134 90,126 95,170 100,205 105,180 112,154 118,184 127,190 134,164 140,204 147,236 152,224 154,236 158,209 163,218 167,210 173,264 177,228 181,292 188,240 194,225 201,200 207,150 213,190 218,277 226,142 234,185 243,132 253,180 264,127 268,135 271,128 276,186 286,133 296,160 301,168 307,145 314,104 323,163 334,122 340,144 346,126 350,138 356,144 360,128 368,121 374,136 380,142 387,128 392,140 398,121 402,142 408,119 414,146 419,130 424,124 428,142 432,150 437,128 442,118 446,142 450,140 458,118 464,162 468,130 473,109 480,165 488,117 493,130 498,140 503,122 507,118 512,140 517,120 522,148 527,125 530,142 533,155 538,133 542,150 545,185 550,117 554,148 558,165 562,140 565,165 568,135 575,208 579,150 583,190 587,150 590,170 593,135 596,180 599,140 603,109 606,150 609,239 614,122 618,180 621,247 623,190 625,238 628,190 631,235 633,185 635,215 638,175 641,211 644,150 648,140';
// Upper and lower envelope of the dense part, x,top,bottom
const dense = '648,138,170 658,120,187 665,133,180 690,128,178 702,122,192 710,150,215 728,140,220 740,138,187 755,116,177 775,116,187 783,103,182 800,128,197 812,150,230 825,140,230 848,143,230 855,133,192 878,103,177 890,138,208 903,133,208 922,116,217 935,118,187 960,106,182 1000,118,192 1060,120,187 1075,150,222 1085,128,187 1100,116,192 1180,116,183 1280,120,187 1310,128,182 1340,128,178 1395,126,182 1408,130,185 1414,150,190';
const parse = s => s.split(' ').map(p => p.split(',').map(Number));

function random(seed) {
  return () => (seed = (seed * 16807) % 2147483647) / 2147483647;
}

// Full trace; dips are [x, y] spikes inside the dense part
function buildTrace(seed, dips) {
  const rnd = random(seed);
  const pts = parse(low).map(([x, y]) => [546 + x / 1.742, 257 + y / 3]);
  const high = parse(mid);
  const env = parse(dense);
  let k = 0, up = true;
  for (let x = 649; x <= 1414; x += x < 930 ? 1.8 : 1.2) {
    while (env[k + 1][0] < x) k++;
    const t = (x - env[k][0]) / (env[k + 1][0] - env[k][0]);
    const top = env[k][1] + (env[k + 1][1] - env[k][1]) * t;
    const bottom = env[k][2] + (env[k + 1][2] - env[k][2]) * t;
    const r = rnd() * 0.36 * (bottom - top);
    high.push([x, up ? top + r : bottom - r]);
    up = !up;
  }
  dips.forEach(([x, y]) => {
    const at = high.findIndex(p => p[0] >= x);
    high.splice(at, 0, [x, y]);
  });
  return pts.concat(high.map(([x, y]) => [1446 + x / 1.5633, 257 + y / 3]));
}
const path = pts => 'M' + pts.map(p => p[0].toFixed(1) + ' ' + p[1].toFixed(1)).join('L');

// Main plot
const levels = [];
for (let d = 38; d > DB0; d -= 2) levels.push(d);
const freqs = [];
for (let dec = 1; dec <= 10000; dec *= 10) {
  for (let n = 1; n < 10; n++) if (n * dec > F0 && n * dec < F1) freqs.push(n * dec);
}
let svg = '';
for (let f = 11000; f < F1; f += 1000) svg += `<path class="grid-light" d="M${fx(f)} 0V${H}"/>`;
levels.forEach(d => svg += `<path class="${d % 20 ? 'grid-light' : 'grid-mid'}" d="M0 ${dy(d)}H${W}"/>`);
freqs.forEach(f => {
  const decade = Number.isInteger(Math.round(Math.log10(f) * 1e6) / 1e6);
  svg += `<path class="${decade ? 'grid-dark' : 'grid-mid'}" d="M${fx(f)} 0V${H}"/>`;
});
const main = buildTrace(77, [[820, 290], [836, 302], [897, 295]]);
svg += `<path class="trace-line" d="${path(main)}"/>`;
svg += `<path class="cursor-line" d="M${fx(228)} 0V${H}M0 ${dy(1.2)}H${W}"/>`;
const plot = document.getElementById('plot');
plot.setAttribute('viewBox', `0 0 ${W} ${H}`);
plot.innerHTML = svg;

// Axis labels
let html = '';
for (let d = 30; d >= -200; d -= 10) {
  html += `<span class="${d % 20 ? 'minor' : ''}" style="top:${dy(d) / H * 100}%">${d}</span>`;
}
html += `<span class="cursor" style="top:${dy(1.2) / H * 100}%">1,2</span>`;
document.getElementById('y-axis').innerHTML = html;

const hz = [2, 3, 4, 5, 6, 7, 8, 9, 10, 20, 30, 40, 50, 60, 70, 80, 100, 200, 300, 400, 500, 600, 700, 800,
  1000, 2000, 3000, 4000, 5000, 6000, 7000, 8000, 9000, 10000, 12000, 14000, 17000, 20000];
html = '';
hz.forEach(f => {
  const minor = f > 10000 && f < 20000;
  html += `<span class="${minor ? 'minor' : ''}" style="left:${fx(f) / W * 100}%">${f < 1000 ? f : f / 1000 + 'k'}</span>`;
});
html += `<span style="left:${fx(25400) / W * 100}%">26,2kHz</span>`;
html += `<span class="cursor" style="left:${fx(228) / W * 100}%">228</span>`;
document.getElementById('x-axis').innerHTML = html;

// Thumbnails, 20 Hz .. 20 kHz
const variants = {
  1: buildTrace(11, [[790, 250], [836, 255], [860, 250]]),
  2: buildTrace(23, [[652, 330], [655, 300], [810, 200], [880, 330], [884, 300], [1012, 350], [1016, 300], [1060, 270]]),
  3: main
};
document.querySelectorAll('.thumb-plot').forEach(el => {
  const sx = 139 / (fx(20000) - fx(20));
  let out = '';
  freqs.filter(f => f > 20).forEach(f => {
    const x = (fx(f) - fx(20)) * sx;
    out += `<path class="thumb-grid" d="M${x} 0V92"/>`;
  });
  for (let y = 3; y < 92; y += 9) out += `<path class="thumb-grid" d="M0 ${y}H139"/>`;
  const pts = variants[el.dataset.index].map(([x, y]) => [(x - fx(20)) * sx, 15 + (y - 305) * 0.365]);
  out += `<path class="thumb-line" d="${path(pts)}"/>`;
  el.setAttribute('viewBox', '0 0 139 92');
  el.innerHTML = out;
});
```
